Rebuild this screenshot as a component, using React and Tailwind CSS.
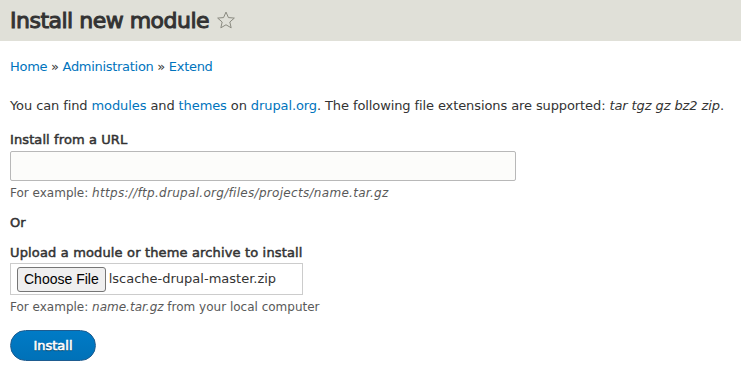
import React from 'react';

const FONT = { fontFamily: '"DejaVu Sans", Verdana, sans-serif' };

export default function App() {
  return (
    <div className="min-h-[378px] bg-white text-[#333] text-[13px] leading-[18px] tracking-[-0.1px]" style={FONT}>
      {/* Page header */}
      <div className="bg-[#e0e0d8] h-[41px] flex items-center px-[10px]">
        <h1 className="text-[22px] font-normal text-[#333] leading-none tracking-[-0.5px] [-webkit-text-stroke:1px_#333]">Install new module</h1>
        <svg width="20" height="20" viewBox="0 0 24 24" className="ml-[7px] mb-[1px]">
          <path d="M12 2.5l2.9 6.6 7.1.6-5.4 4.7 1.6 7-6.2-3.7-6.2 3.7 1.6-7L2 9.7l7.1-.6z"
            fill="none" stroke="#8a8a80" strokeWidth="1.2" strokeLinejoin="miter" />
        </svg>
      </div>

      <div className="px-[10px]">
        <div className="pt-[17px] text-[#0074bd] whitespace-nowrap tracking-[-0.3px]">
          <a href="#">Home</a> <span className="text-[#333]">»</span> <a href="#">Administration</a>{' '}
          <span className="text-[#333]">»</span> <a href="#">Extend</a>
        </div>

        <p className="mt-[21px] whitespace-nowrap">
          You can find <a className="text-[#0074bd]" href="#">modules</a> and{' '}
          <a className="text-[#0074bd]" href="#">themes</a> on{' '}
          <a className="text-[#0074bd]" href="#">drupal.org</a>. The following file extensions are supported:{' '}
          <em>tar tgz gz bz2 zip</em>.
        </p>

        <label className="mt-[16px] block tracking-[0.1px] [-webkit-text-stroke:0.5px_#333]">Install from a URL</label>
        <input type="text"
          className="mt-[2px] block w-[506px] h-[30px] border border-[#b8b8b8] rounded-[2px] bg-[#fcfcfa] outline-none" />
        <div className="mt-[4px] text-[12px] leading-[16px] text-[#595959] tracking-normal">
          For example: <em className="tracking-[0.3px]">https://ftp.drupal.org/files/projects/name.tar.gz</em>
        </div>

        <div className="mt-[13px] [-webkit-text-stroke:0.5px_#333]">Or</div>

        <label className="mt-[12px] block tracking-[0.15px] [-webkit-text-stroke:0.5px_#333]">Upload a module or theme archive to install</label>
        <div className="mt-[1px] w-[293px] h-[32px] border border-[#ccc] bg-white flex items-center pl-[6px]">
          <button className="h-[25px] px-[6px] border border-[#767676] rounded-[3px] bg-[#efefef] text-[14px] text-black tracking-normal"
            style={{ fontFamily: '"Liberation Sans", Arial, sans-serif' }}>
            Choose File
          </button>
          <span className="ml-[3px] text-[#333] tracking-normal">lscache-drupal-master.zip</span>
        </div>
        <div className="mt-[4px] text-[12px] leading-[16px] text-[#595959] tracking-normal">
          For example: <em>name.tar.gz</em> from your local computer
        </div>

        <button
          className="mt-[15px] block w-[86px] h-[31px] rounded-full border border-[#1e5c90] bg-gradient-to-b from-[#007bc6] to-[#0071b8] text-white text-[13px] tracking-normal [-webkit-text-stroke:0.6px_#fff] [text-shadow:0_1px_1px_rgba(0,0,0,0.7)]">
          Install
        </button>
      </div>
    </div>
  );
}
